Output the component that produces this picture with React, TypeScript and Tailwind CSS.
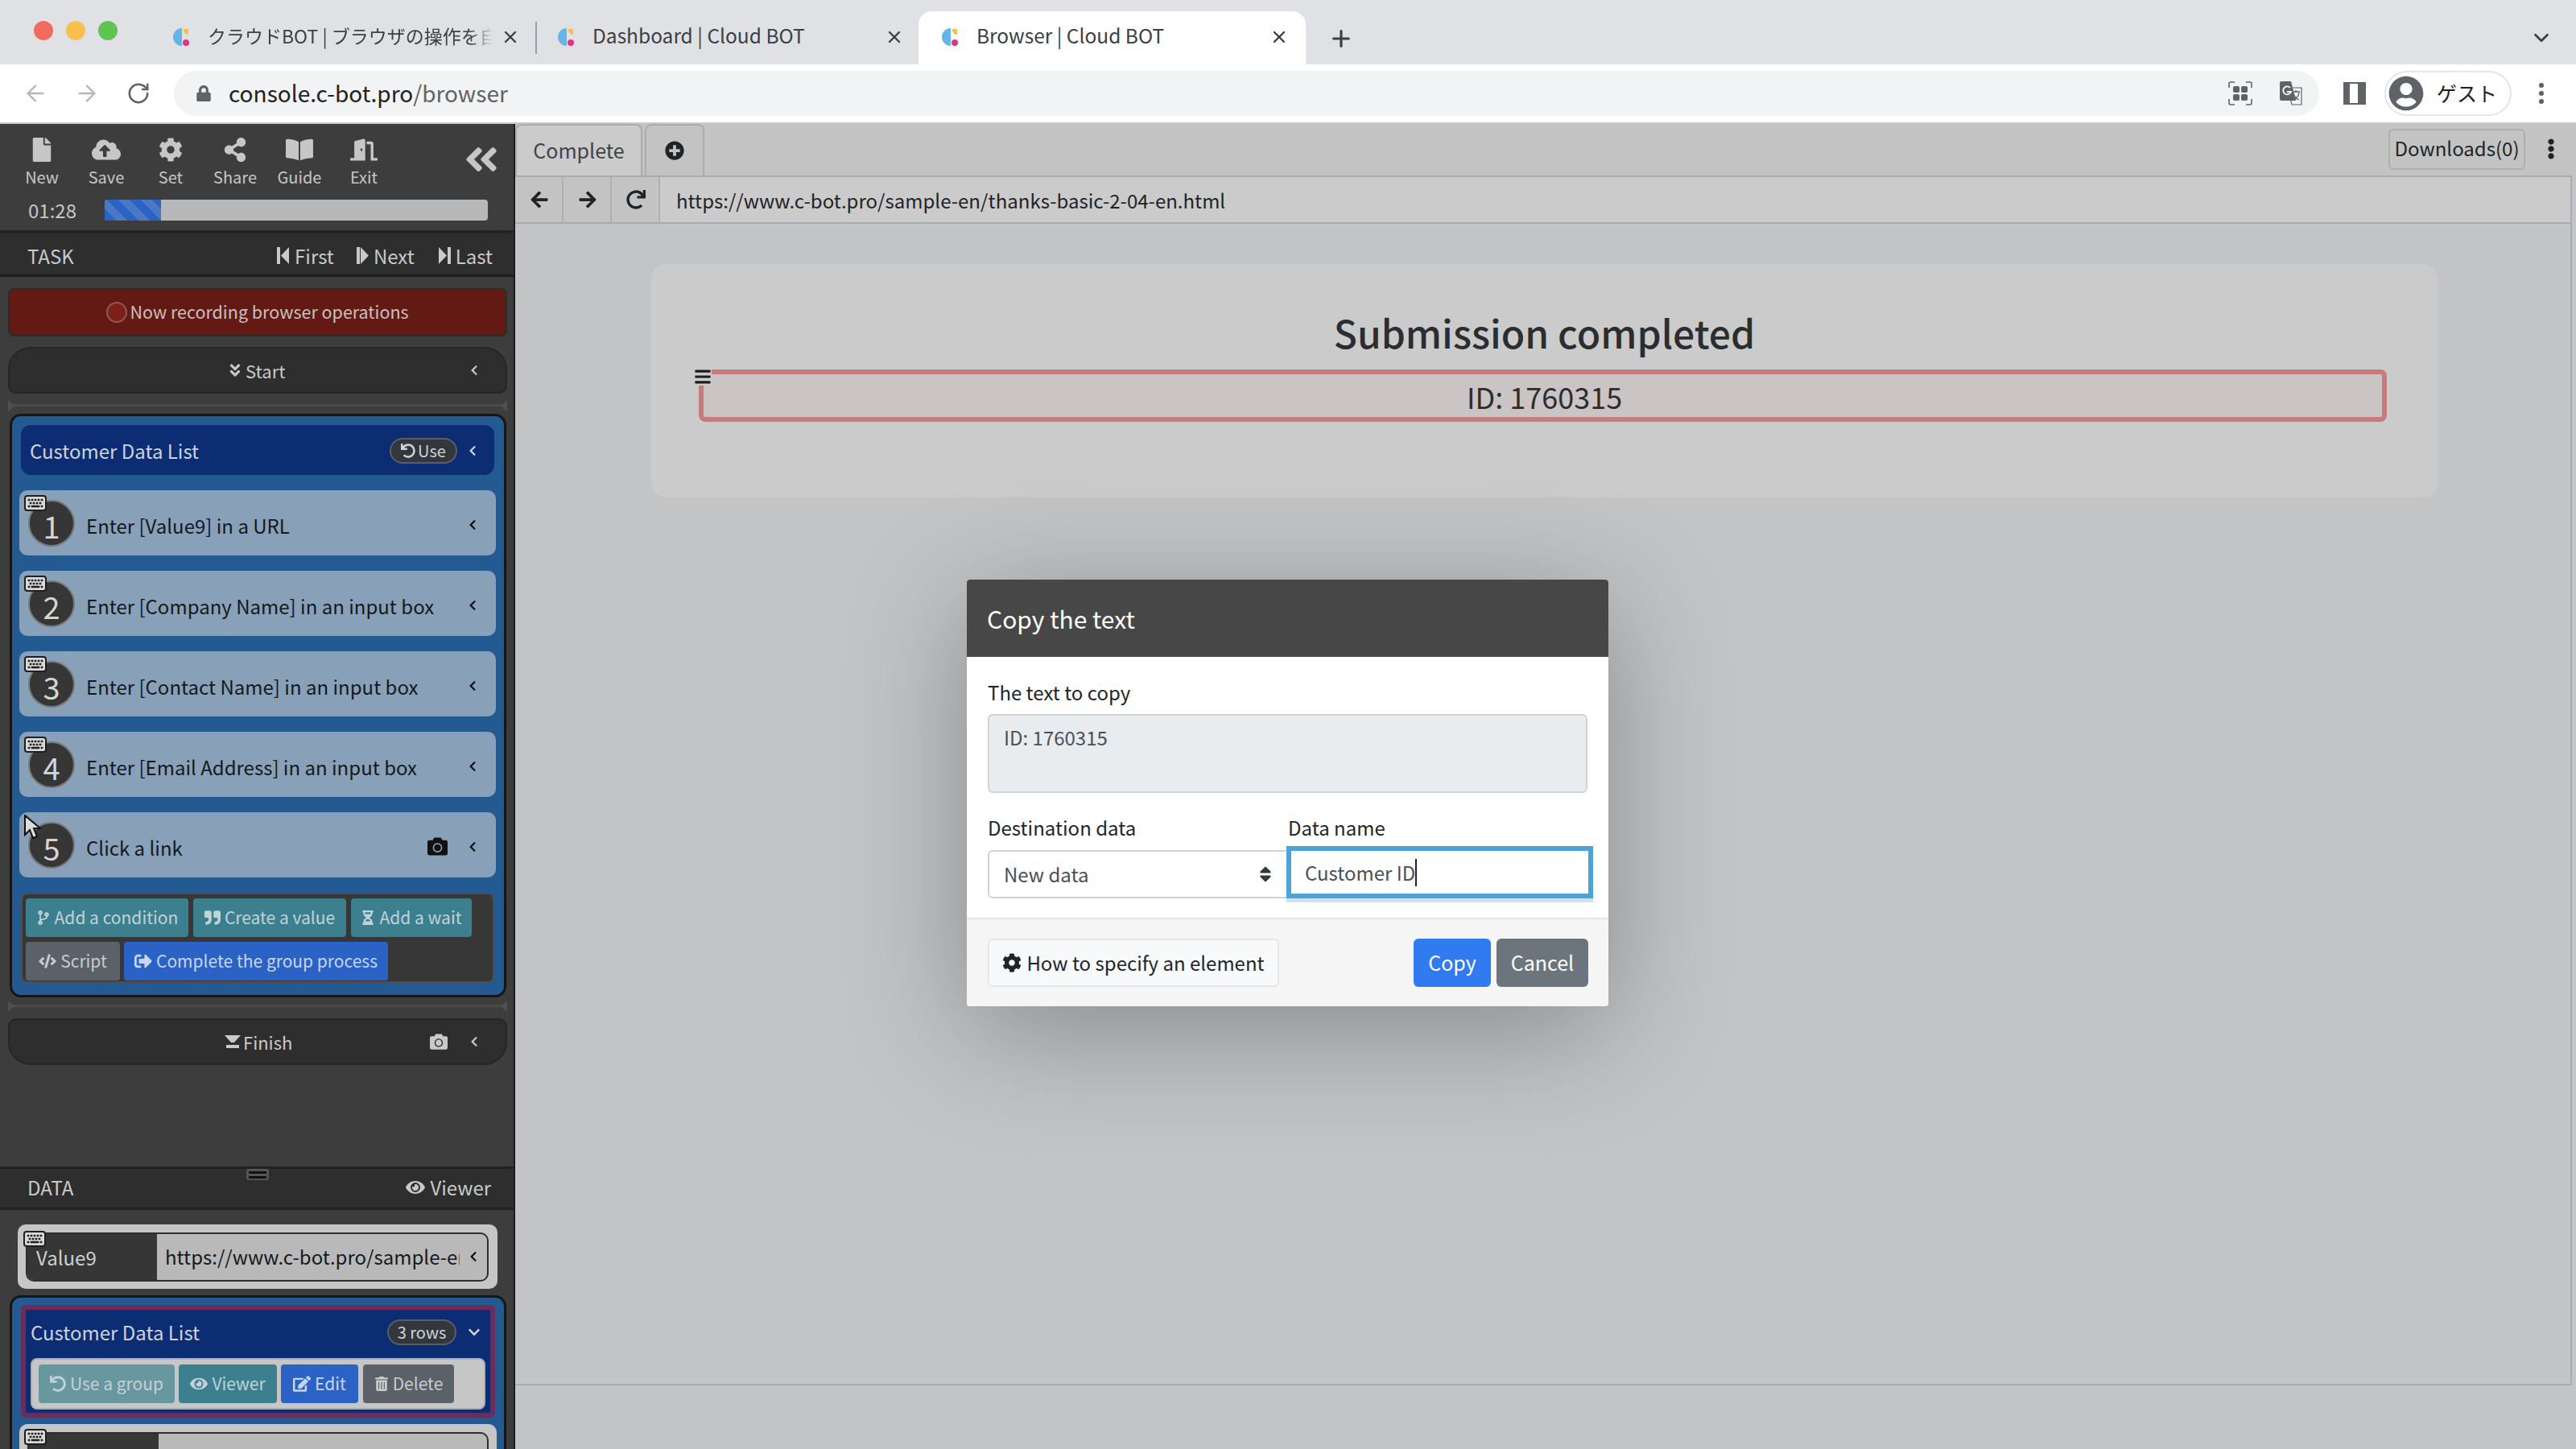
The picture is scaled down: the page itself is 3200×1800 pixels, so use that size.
import type { ReactNode } from 'react'
import { ArrowLeft, ArrowRight, ChevronDown, Plus, RotateCw, X } from 'lucide-react'
import {
  FaAngleDoubleDown, FaAngleDoubleLeft, FaArrowLeft, FaArrowRight, FaBars, FaBookOpen, FaCamera,
  FaChevronDown, FaChevronLeft, FaCloudUploadAlt, FaCode, FaCodeBranch, FaCog, FaDoorOpen, FaEdit,
  FaEllipsisV, FaEye, FaFile, FaHourglassHalf, FaKeyboard, FaLock, FaPlusCircle, FaQuoteRight,
  FaRedo, FaShareAlt, FaSignOutAlt, FaSort, FaTrashAlt, FaUndo, FaUserCircle,
} from 'react-icons/fa'

function Favicon() {
  return (
    <svg width="22" height="26" viewBox="0 0 22 26" className="shrink-0">
      <path d="M11 2 A11 11 0 0 0 11 24 L11 2Z" fill="#66b5e8" />
      <path d="M13 3 h6 v7 a6 6 0 0 1 -6 -7Z" fill="#f5c04a" />
      <circle cx="16" cy="20" r="4" fill="#e0357f" />
    </svg>
  )
}

function BrowserTab({ title, className, textClass }: { title: string; className: string; textClass: string }) {
  return (
    <div className={`flex h-[66px] items-center pb-[2px] ${className}`}>
      <Favicon />
      <span className={`ml-[21px] flex-1 overflow-hidden whitespace-nowrap pb-[3px] text-[#3c4043] ${textClass}`}>{title}</span>
      <X size={24} strokeWidth={2.4} className="shrink-0 text-[#3c4043]" />
    </div>
  )
}

function ChromeBar() {
  return (
    <>
      <div className="flex h-[80px] items-end bg-[#dfe1e5]">
        <div className="flex h-full w-[177px] items-center gap-[16px] pb-[4px] pl-[42px]">
          <span className="h-[24px] w-[24px] rounded-full bg-[#f26a5e]" />
          <span className="h-[24px] w-[24px] rounded-full bg-[#f8bf4b]" />
          <span className="h-[24px] w-[24px] rounded-full bg-[#5fc452]" />
        </div>
        <BrowserTab
          title="クラウドBOT | ブラウザの操作を自"
          className="w-[488px] pl-[38px] pr-[19px]"
          textClass="mr-[10px] text-[23px] [mask-image:linear-gradient(90deg,#000_92%,transparent)]"
        />
        <div className="mb-[13px] h-[40px] w-[2px] bg-[#9aa0a6]" />
        <BrowserTab title="Dashboard | Cloud BOT" className="w-[474px] pl-[26px] pr-[18px]" textClass="text-[24.5px]" />
        <BrowserTab title="Browser | Cloud BOT" className="w-[481px] rounded-t-[16px] bg-white pl-[29px] pr-[21px]" textClass="text-[24.5px]" />
        <Plus size={32} strokeWidth={2.4} className="mb-[16px] ml-[28px] text-[#3c4043]" />
        <ChevronDown size={30} strokeWidth={2.2} className="mb-[18px] ml-auto mr-[28px] text-[#3c4043]" />
      </div>
      <div className="flex h-[74px] items-center border-b-[2px] border-[#c8c9cc] bg-white">
        <ArrowLeft size={32} strokeWidth={1.8} className="ml-[28px] text-[#b4b6ba]" />
        <ArrowRight size={32} strokeWidth={1.8} className="ml-[32px] text-[#b4b6ba]" />
        <RotateCw size={30} strokeWidth={2} className="ml-[33px] text-[#5f6368]" />
        <div className="ml-[29px] flex h-[56px] w-[2665px] items-center rounded-full bg-[#f1f3f4]">
          <FaLock size={20} className="ml-[27px] text-[#5f6368]" />
          <span className="ml-[21px] pb-[2px] text-[28px] text-[#202124]">console.c-bot.pro<span className="text-[#5f6368]">/browser</span></span>
          <svg width="30" height="30" viewBox="0 0 30 30" className="ml-auto mr-[34px] text-[#5f6368]" fill="none" stroke="currentColor" strokeWidth="1.6">
            <path d="M1 8V3a2 2 0 0 1 2-2h5M22 1h5a2 2 0 0 1 2 2v5M1 22v5a2 2 0 0 0 2 2h5M22 29h5a2 2 0 0 0 2-2v-5" />
            <rect x="6" y="6" width="8" height="8" rx="2" fill="currentColor" stroke="none" />
            <rect x="16" y="6" width="8" height="8" rx="2" fill="currentColor" stroke="none" />
            <rect x="6" y="16" width="8" height="8" rx="2" fill="currentColor" stroke="none" />
            <rect x="16" y="16" width="8" height="8" rx="2" fill="currentColor" stroke="none" />
          </svg>
          <svg width="28" height="30" viewBox="0 0 28 30" className="mr-[21px] text-[#5f6368]">
            <path d="M10 8h17v21H15z" fill="none" stroke="currentColor" strokeWidth="1.2" />
            <path d="M2 0h12l6 24H2a2 2 0 0 1-2-2V2a2 2 0 0 1 2-2z" fill="currentColor" />
            <path d="M13 8a5 5 0 1 0 1 5H9" fill="none" stroke="#fff" strokeWidth="1.8" />
            <path d="M16 13h9M20 11v3M24 14c-1 5-4 8-7 9M17 15c1 4 4 7 7 8" fill="none" stroke="currentColor" strokeWidth="1.3" />
          </svg>
        </div>
        <div className="ml-[30px] h-[28px] w-[28px] border-y-[2px] border-l-[8px] border-r-[10px] border-[#5f6368] bg-white" />
        <div className="ml-[23px] flex h-[56px] w-[158px] items-center rounded-full border-[2px] border-[#e4e5e7] pl-[3px]">
          <FaUserCircle size={44} className="text-[#5f6368]" />
          <span className="ml-[16px] text-[25px] text-[#202124]">ゲスト</span>
        </div>
        <span className="ml-[34px] flex flex-col gap-[4px]">
          <i className="h-[6px] w-[6px] rounded-full bg-[#5f6368]" />
          <i className="h-[6px] w-[6px] rounded-full bg-[#5f6368]" />
          <i className="h-[6px] w-[6px] rounded-full bg-[#5f6368]" />
        </span>
      </div>
    </>
  )
}

function ToolItem({ icon, label }: { icon: ReactNode; label: string }) {
  return (
    <div className="flex w-[80px] flex-col items-center">
      <div className="flex h-[36px] items-center text-[#c6c6c6]">{icon}</div>
      <span className="mt-[4px] text-[20px] leading-[24px] text-[#c6c6c6]">{label}</span>
    </div>
  )
}

function KeyBadge({ className }: { className: string }) {
  return (
    <span className={`absolute flex h-[20px] w-[28px] items-center justify-center rounded-[4px] bg-[#1f1f1f] text-[#d8d8d8] ${className}`}>
      <FaKeyboard size={24} />
    </span>
  )
}

function Divider() {
  return (
    <div className="relative ml-[10px] mr-[8px] h-[13px]">
      <div className="absolute inset-x-0 top-[5px] h-[3px] bg-[#4b4b4b]" />
      <div className="absolute left-0 top-0 h-0 w-0 border-y-[7px] border-l-[8px] border-y-transparent border-l-[#505050]" />
      <div className="absolute right-0 top-0 h-0 w-0 border-y-[7px] border-r-[8px] border-y-transparent border-r-[#505050]" />
    </div>
  )
}

// skip icons: first / next / last are a bar plus a triangle
function SkipIcon({ kind }: { kind: 'first' | 'next' | 'last' }) {
  const d = {
    first: 'M0 0h4v21H0zM15 0v21L5 10.5z',
    next: 'M0 0h4v21H0zM5 0l10 10.5L5 21z',
    last: 'M11 0h4v21h-4zM0 0l10 10.5L0 21z',
  }[kind]
  return <svg width="15" height="21" viewBox="0 0 15 21" fill="currentColor"><path d={d} /></svg>
}

const steps = [
  { n: 1, text: 'Enter [Value9] in a URL', key: true },
  { n: 2, text: 'Enter [Company Name] in an input box', key: true },
  { n: 3, text: 'Enter [Contact Name] in an input box', key: true },
  { n: 4, text: 'Enter [Email Address] in an input box', key: true },
  { n: 5, text: 'Click a link', key: false },
]

function StepRow({ n, text, hasKey }: { n: number; text: string; hasKey: boolean }) {
  return (
    <div className="relative mb-[19px] flex h-[81px] items-center rounded-[10px] bg-[#88a0b8] pl-[11px] pr-[22px]">
      {hasKey && <KeyBadge className="left-[6px] top-[6px]" />}
      <span className="flex h-[58px] w-[58px] shrink-0 items-center justify-center rounded-full border-[2px] border-[#77787a] bg-[#363636] pt-[6px] text-[38px] leading-none text-[#d5d5d5]">{n}</span>
      <span className="ml-[14px] flex-1 pt-[6px] text-[24px] text-[#15191d]">{text}</span>
      {n === 5 && <FaCamera size={25} className="mr-[24px] mt-[4px] text-[#111]" />}
      <FaChevronLeft size={14} className="mt-[4px] text-[#111]" />
    </div>
  )
}

function ActionBtn({ children, className }: { children: ReactNode; className: string }) {
  return (
    <span className={`flex h-[48px] items-center justify-center gap-[5px] rounded-[4px] text-[21px] whitespace-nowrap ${className}`}>{children}</span>
  )
}

function Sidebar() {
  return (
    <aside className="flex h-full w-[640px] shrink-0 flex-col overflow-hidden border-r-[2px] border-[#1c1c1c] bg-[#3d3d3d]">
      <div className="relative h-[136px] shrink-0 border-b-[4px] border-[#242424]">
        <div className="flex pl-[12px] pt-[14px]">
          <ToolItem icon={<FaFile size={30} />} label="New" />
          <ToolItem icon={<FaCloudUploadAlt size={36} />} label="Save" />
          <ToolItem icon={<FaCog size={30} />} label="Set" />
          <ToolItem icon={<FaShareAlt size={30} />} label="Share" />
          <ToolItem icon={<FaBookOpen size={34} />} label="Guide" />
          <ToolItem icon={<FaDoorOpen size={34} />} label="Exit" />
          <FaAngleDoubleLeft size={48} className="absolute left-[574px] top-[20px] text-[#c6c6c6]" />
        </div>
        <div className="mt-[16px] flex items-center pl-[35px]">
          <span className="w-[95px] text-[24px] leading-[26px] text-[#c6c6c6]">01:28</span>
          <div className="h-[26px] w-[476px] overflow-hidden rounded-[4px] bg-[#b7b8ba]">
            <div className="h-full w-[70px] bg-[repeating-linear-gradient(45deg,#2a62c6_0,#2a62c6_10px,#4a78c4_10px,#4a78c4_20px)]" />
          </div>
        </div>
      </div>
      <div className="flex h-[54px] shrink-0 items-center border-b-[3px] border-[#1f1f1f] bg-[#2e2e2e] pl-[34px] pr-[26px] pt-[4px] text-[24px] text-[#c9c9c9]">
        <span>TASK</span>
        <span className="ml-auto flex items-center gap-[7px]"><SkipIcon kind="first" />First</span>
        <span className="ml-[28px] flex items-center gap-[6px]"><SkipIcon kind="next" />Next</span>
        <span className="ml-[30px] flex items-center gap-[6px]"><SkipIcon kind="last" />Last</span>
      </div>

      <div className="ml-[10px] mr-[8px] mt-[14px] flex h-[60px] shrink-0 items-center justify-center rounded-[8px] border-[2px] border-[#2b2b2b] bg-[#631a14] pb-[2px] text-[21.5px] text-[#c9c0bd]">
        <span className="mr-[3px] mt-[2px] h-[26px] w-[26px] rounded-full border-[2px] border-[#8e5a54] bg-[#7f2018]" />
        Now recording browser operations
      </div>

      <div className="ml-[10px] mr-[8px] mt-[13px] flex h-[58px] shrink-0 items-center rounded-b-[10px] rounded-t-[28px] border-[2px] border-[#262626] bg-[#2e2e2e] text-[22px] text-[#c9c9c9]">
        <span className="ml-[270px] flex items-center gap-[3px]"><FaAngleDoubleDown size={20} />Start</span>
        <FaChevronLeft size={14} className="ml-auto mr-[32px]" />
      </div>
      <div className="mt-[8px] shrink-0"><Divider /></div>

      <div className="ml-[12px] mr-[9px] mt-[4px] shrink-0 rounded-[14px] border-[3px] border-[#161616] bg-[#235a91] pb-[15px] pl-[9px] pr-[10px] pt-[11px]">
        <div className="mx-[2px] mb-[19px] flex h-[62px] items-center rounded-[12px] bg-[#0c2d74] pl-[11px] pr-[20px] pt-[2px] text-[24px] text-[#cfd3da]">
          <span>Customer Data List</span>
          <span className="ml-auto mr-[12px] flex h-[32px] w-[84px] items-center justify-center gap-[3px] rounded-full border-[2px] border-[#5a5f66] bg-[#33363a] text-[20px]"><FaRedo size={18} className="-scale-x-100" />Use</span>
          <FaChevronLeft size={14} />
        </div>
        {steps.map(s => <StepRow key={s.n} n={s.n} text={s.text} hasKey={s.key} />)}
        <div className="mx-[2px] mt-[1px] rounded-[8px] border-[2px] border-[#4b4f54] bg-[#373737] pb-[1px] pl-[4px] pt-[5px]">
          <div className="flex gap-[6px]">
            <ActionBtn className="w-[202px] bg-[#3c808f] text-[#c2d2d6]"><FaCodeBranch size={18} />Add a condition</ActionBtn>
            <ActionBtn className="w-[190px] bg-[#3c808f] text-[#c2d2d6]"><FaQuoteRight size={20} />Create a value</ActionBtn>
            <ActionBtn className="w-[150px] bg-[#3c808f] text-[#c2d2d6]"><FaHourglassHalf size={18} />Add a wait</ActionBtn>
          </div>
          <div className="mt-[6px] flex gap-[5px]">
            <ActionBtn className="w-[117px] bg-[#5b6168] text-[#c9cbce]"><FaCode size={22} />Script</ActionBtn>
            <ActionBtn className="w-[328px] bg-[#2a62c6] text-[#c7d6ee]"><FaSignOutAlt size={22} />Complete the group process</ActionBtn>
          </div>
        </div>
      </div>
      <div className="mt-[4px] shrink-0"><Divider /></div>

      <div className="ml-[10px] mr-[8px] mt-[9px] flex h-[58px] shrink-0 items-center rounded-b-[28px] rounded-t-[10px] border-[2px] border-[#262626] bg-[#2e2e2e] text-[22px] text-[#c9c9c9]">
        <span className="ml-[267px] flex items-center gap-[3px]">
          <svg width="20" height="16" viewBox="0 0 20 16" fill="currentColor"><path d="M0 0h20L12 9h-4z" /><path d="M2 12h16v4H2z" /></svg>
          Finish
        </span>
        <FaCamera size={22} className="ml-auto mr-[26px]" />
        <FaChevronLeft size={14} className="mr-[32px]" />
      </div>

      <div className="relative mt-[126px] flex h-[54px] shrink-0 items-center border-y-[3px] border-[#222] bg-[#2e2e2e] pb-[2px] pl-[34px] pr-[28px] text-[24px] text-[#c9c9c9]">
        <span>DATA</span>
        <span className="ml-auto flex items-center gap-[6px]"><FaEye size={24} />Viewer</span>
        <div className="absolute left-[306px] top-[0px] flex h-[14px] w-[28px] flex-col justify-center gap-[3px] rounded-[3px] bg-[#555] px-[3px]">
          <i className="h-[3px] bg-[#111]" /><i className="h-[3px] bg-[#111]" />
        </div>
      </div>

      <div className="relative ml-[22px] mr-[20px] mt-[18px] shrink-0 rounded-[10px] bg-[#c6c6c6] pb-[9px] pl-[10px] pr-[11px] pt-[10px]">
        <KeyBadge className="left-[7px] top-[8px]" />
        <div className="flex h-[61px] overflow-hidden rounded-[10px] border-[2px] border-[#2e2e2e] bg-[#b9b9b9] text-[24px]">
          <span className="flex w-[161px] items-center bg-[#363636] pl-[11px] text-[#cfcfcf]">Value9</span>
          <span className="ml-[10px] w-[366px] overflow-hidden whitespace-nowrap pt-[10px] text-[#15191d]">https://www.c-bot.pro/sample-en</span>
          <FaChevronLeft size={14} className="ml-[10px] mt-[21px] text-[#111]" />
        </div>
      </div>

      <div className="ml-[12px] mr-[9px] mt-[8px] min-h-0 flex-1 rounded-t-[14px] border-[3px] border-b-0 border-[#161616] bg-[#235a91] px-[11px] pt-[9px]">
        <div className="rounded-[6px] border-[6px] border-[#6c2c5a] bg-[#0c2d74] px-[6px] pb-[4px]">
          <div className="flex h-[60px] items-center pb-[4px] text-[24px] text-[#cfd3da]">
            <span>Customer Data List</span>
            <span className="ml-auto mr-[14px] flex h-[32px] w-[86px] items-center justify-center rounded-full border-[2px] border-[#5a5f66] bg-[#33363a] text-[20px]">3 rows</span>
            <FaChevronDown size={16} className="mr-[6px]" />
          </div>
          <div className="flex h-[64px] items-center gap-[5px] rounded-[8px] border-[2px] border-[#a7aeb8] bg-[#c6c6c6] pl-[8px]">
            <ActionBtn className="w-[169px] bg-[#69979f] text-[#c2d2d6]"><FaUndo size={20} />Use a group</ActionBtn>
            <ActionBtn className="w-[122px] bg-[#3c808f] text-[#c2d2d6]"><FaEye size={22} />Viewer</ActionBtn>
            <ActionBtn className="w-[96px] bg-[#2a62c6] text-[#c7d6ee]"><FaEdit size={22} />Edit</ActionBtn>
            <ActionBtn className="ml-[1px] w-[113px] bg-[#5b6168] text-[#c9cbce]"><FaTrashAlt size={18} />Delete</ActionBtn>
          </div>
        </div>
        <div className="relative mx-[-2px] mt-[8px] h-[60px] rounded-t-[10px] bg-[#c6c6c6] px-[10px] pt-[10px]">
          <KeyBadge className="left-[6px] top-[6px]" />
          <div className="flex h-[60px] overflow-hidden rounded-[10px] border-[2px] border-[#2e2e2e] bg-[#b9b9b9]">
            <span className="w-[161px] bg-[#363636]" />
          </div>
        </div>
      </div>
    </aside>
  )
}

function NavBtn({ children }: { children: ReactNode }) {
  return <div className="flex h-full w-[60px] items-center justify-center border-r-[2px] border-[#aeb0b3] bg-[#c3c3c3] pl-[2px] text-[#1f2327]">{children}</div>
}

function BrowserPane() {
  return (
    <main className="relative flex h-full min-w-0 flex-1 flex-col bg-[#c3c4c6]">
      <div className="flex h-[64px] shrink-0 items-end bg-[#c3c3c3]">
        <div className="flex h-[64px] w-[158px] items-center justify-center rounded-t-[8px] border-x-[2px] border-t-[2px] border-[#a9abae] bg-[#cbcbcb] text-[25px] text-[#3f4347]">Complete</div>
        <div className="ml-[3px] flex h-[64px] w-[74px] items-center justify-center rounded-t-[8px] border-x-[2px] border-t-[2px] border-[#a9abae] text-[#1f2327]"><FaPlusCircle size={24} /></div>
        <div className="mb-[7px] ml-auto mr-[19px] flex h-[51px] w-[170px] items-center justify-center rounded-[6px] border-[2px] border-[#adafb2] pb-[3px] text-[24px] text-[#1f2327]">Downloads(0)</div>
        <FaEllipsisV size={26} className="mb-[20px] mr-[18px] text-[#1f2327]" />
      </div>
      <div className="mr-[5px] flex h-[60px] shrink-0 items-center border-y-[2px] border-r-[2px] border-[#a9abae] bg-[#cbcbcb]">
        <NavBtn><FaArrowLeft size={24} /></NavBtn>
        <NavBtn><FaArrowRight size={24} /></NavBtn>
        <NavBtn><FaRedo size={24} /></NavBtn>
        <span className="ml-[20px] pt-[2px] text-[24px] text-[#1f2327]">https://www.c-bot.pro/sample-en/thanks-basic-2-04-en.html</span>
      </div>
      <div className="mr-[5px] flex h-[1443px] shrink-0 flex-col border-b-[2px] border-r-[2px] border-[#a9abae]">
        <div className="ml-[169px] mt-[50px] h-[290px] w-[2219px] rounded-[18px] bg-[#cbcbcb] pl-[59px] pr-[63px]">
          <div className="pl-[4px] pt-[45px] text-center text-[48px] leading-[78px] font-medium text-[#2b2e31]">Submission completed</div>
          <div className="relative mt-[8px] flex h-[65px] items-center justify-center rounded-[8px] border-[6px] border-[#c47c7c] bg-[#cbc4c4] pl-[4px] text-[36px] text-[#2b2e31]">
            ID: 1760315
            <FaBars size={22} className="absolute left-[-12px] top-[-8px] bg-[#cbcbcb] text-[#1a1d20]" />
          </div>
        </div>
      </div>
    </main>
  )
}

function CopyDialog() {
  return (
    <div className="absolute left-[1201px] top-[720px] flex h-[530px] w-[797px] flex-col overflow-hidden rounded-[4px] bg-white shadow-[0_30px_150px_rgba(0,0,0,0.3)]">
      <div className="flex h-[96px] shrink-0 items-center bg-[#474747] pl-[25px] text-[30px] text-white">Copy the text</div>
      <div className="flex-1 px-[26px] pt-[28px]">
        <div className="text-[24px] leading-[32px] text-[#212529]">The text to copy</div>
        <div className="mt-[11px] h-[98px] rounded-[6px] border-[2px] border-[#ced4da] bg-[#e9ecef] px-[18px] py-[9px] text-[24px] leading-[36px] text-[#495057]">ID: 1760315</div>
        <div className="mt-[27px] flex">
          <div className="w-[371px] shrink-0">
            <div className="text-[24px] leading-[32px] text-[#212529]">Destination data</div>
            <div className="mt-[12px] flex h-[60px] items-center rounded-l-[6px] border-[2px] border-r-0 border-[#ced4da] pl-[18px] text-[24px] text-[#495057]">
              New data
              <FaSort size={24} className="ml-auto mr-[14px] text-[#343a40]" />
            </div>
          </div>
          <div className="flex-1">
            <div className="pl-[2px] text-[24px] leading-[32px] text-[#212529]">Data name</div>
            <div className="relative mr-[-7px] mt-[7px] flex h-[65px] items-center border-[6px] border-[#4ea3d6] bg-white pl-[17px] text-[24px] text-[#495057] shadow-[0_5px_0_#cfe2fb]">
              Customer ID
              <span className="h-[34px] w-[2px] bg-[#212529]" />
            </div>
          </div>
        </div>
      </div>
      <div className="flex h-[110px] shrink-0 items-center border-t-[2px] border-[#e4e6e8] bg-[#f5f5f5] pl-[26px] pr-[25px]">
        <div className="flex h-[60px] w-[362px] items-center justify-center gap-[6px] rounded-[6px] border-[2px] border-[#e4e6e8] bg-[#f8f9fa] text-[24px] text-[#212529]"><FaCog size={24} />How to specify an element</div>
        <div className="ml-auto flex h-[60px] w-[96px] items-center justify-center rounded-[6px] bg-[#307bf0] text-[25px] text-white">Copy</div>
        <div className="ml-[7px] flex h-[60px] w-[114px] items-center justify-center rounded-[6px] bg-[#6c757d] text-[25px] text-white">Cancel</div>
      </div>
    </div>
  )
}

export default function App() {
  return (
    <div className="relative flex h-[1800px] w-[3200px] flex-col overflow-hidden font-['Noto_Sans_CJK_JP','Liberation_Sans',sans-serif]">
      <ChromeBar />
      <div className="flex min-h-0 flex-1">
        <Sidebar />
        <BrowserPane />
      </div>
      <CopyDialog />
      {/* mouse pointer left over the step list */}
      <svg width="22" height="32" viewBox="0 0 22 32" className="absolute left-[29px] top-[1012px]">
        <path d="M2 1v24l6-6 4 10 5-2-4-10h8z" fill="#dcdcdc" stroke="#111" strokeWidth="2" />
      </svg>
    </div>
  )
}
